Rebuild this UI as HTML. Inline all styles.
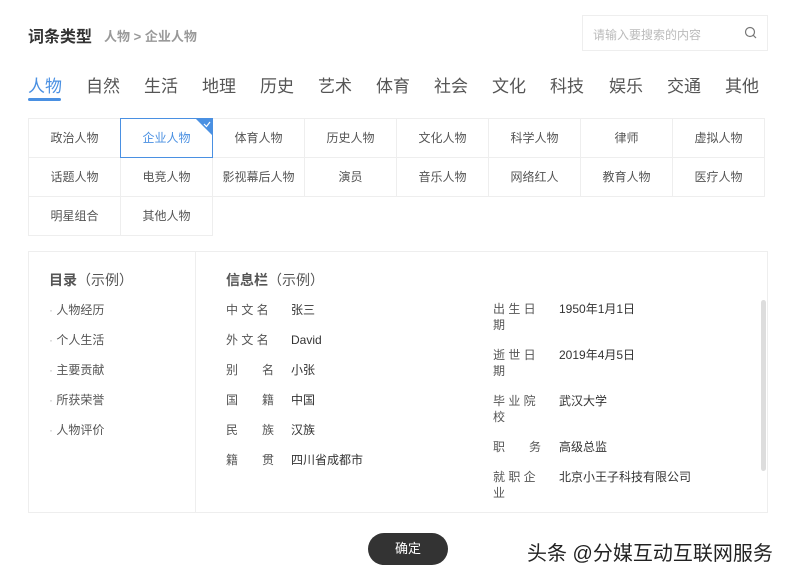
<!DOCTYPE html>
<html><head><meta charset="utf-8"><style>
*{margin:0;padding:0;box-sizing:border-box}
body{width:787px;height:577px;background:#fff;font-family:"Liberation Sans","Noto Sans CJK SC",sans-serif;color:#333;position:relative;overflow:hidden}
.a{position:absolute;white-space:nowrap}
.tab{position:absolute;top:72px;font-size:17px;color:#555}
.cell{position:absolute;width:93px;height:40px;border:1px solid #eee;font-size:12px;color:#555;text-align:center;line-height:38px}
.k{font-size:12px;color:#555}
.v{font-size:12px;color:#333}
.rk{position:absolute;left:493px;width:50px;font-size:12px;color:#555;line-height:16px;white-space:normal}
.rv{position:absolute;left:559px;font-size:12px;color:#333;line-height:16px;white-space:nowrap}
</style></head><body>
<div class="a" style="left:28px;top:23px;font-size:16px;font-weight:bold;color:#333">词条类型</div>
<div class="a" style="left:104px;top:26px;font-size:13px;color:#999;font-weight:bold">人物 &gt; 企业人物</div>
<div class="a" style="left:582px;top:15px;width:186px;height:36px;border:1px solid #eee"></div>
<div class="a" style="left:593px;top:26px;font-size:12px;color:#bbb">请输入要搜索的内容</div>
<svg class="a" style="left:744px;top:26px" width="14" height="14" viewBox="0 0 14 14"><circle cx="6" cy="6" r="4.5" fill="none" stroke="#777" stroke-width="1.2"/><path d="M9.3 9.3L12 12" stroke="#777" stroke-width="1.2"/></svg>
<div class="tab" style="left:28px;color:#4a90e2">人物</div>
<div class="a" style="left:28px;top:98px;width:33px;height:3px;background:#4a90e2;border-radius:2px"></div>
<div class="tab" style="left:86px">自然</div><div class="tab" style="left:144px">生活</div><div class="tab" style="left:202px">地理</div><div class="tab" style="left:260px">历史</div><div class="tab" style="left:318px">艺术</div><div class="tab" style="left:376px">体育</div><div class="tab" style="left:434px">社会</div><div class="tab" style="left:492px">文化</div><div class="tab" style="left:550px">科技</div><div class="tab" style="left:609px">娱乐</div><div class="tab" style="left:667px">交通</div><div class="tab" style="left:725px">其他</div>

<div class="cell" style="left:28px;top:118px">政治人物</div>
<div class="cell" style="left:212px;top:118px">体育人物</div>
<div class="cell" style="left:304px;top:118px">历史人物</div>
<div class="cell" style="left:396px;top:118px">文化人物</div>
<div class="cell" style="left:488px;top:118px">科学人物</div>
<div class="cell" style="left:580px;top:118px">律师</div>
<div class="cell" style="left:672px;top:118px">虚拟人物</div>
<div class="cell" style="left:28px;top:157px">话题人物</div>
<div class="cell" style="left:120px;top:157px">电竞人物</div>
<div class="cell" style="left:212px;top:157px">影视幕后人物</div>
<div class="cell" style="left:304px;top:157px">演员</div>
<div class="cell" style="left:396px;top:157px">音乐人物</div>
<div class="cell" style="left:488px;top:157px">网络红人</div>
<div class="cell" style="left:580px;top:157px">教育人物</div>
<div class="cell" style="left:672px;top:157px">医疗人物</div>
<div class="cell" style="left:28px;top:196px">明星组合</div>
<div class="cell" style="left:120px;top:196px">其他人物</div>
<div class="cell" style="left:120px;top:118px;border-color:#4a90e2;color:#4a90e2;overflow:hidden">企业人物
<svg style="position:absolute;right:0;top:0" width="16" height="16" viewBox="0 0 16 16"><path d="M0 0H16V16Z" fill="#4a90e2"/><path d="M8 5L10.5 7.5L14 3" stroke="#fff" stroke-width="1.2" fill="none"/></svg></div>

<div class="a" style="left:28px;top:251px;width:740px;height:262px;border:1px solid #eee"></div>
<div class="a" style="left:195px;top:252px;width:1px;height:260px;background:#eee"></div>
<div class="a" style="left:49px;top:270px;font-size:14px;color:#555"><b>目录</b>（示例）</div>
<div class="a" style="left:226px;top:270px;font-size:14px;color:#555"><b>信息栏</b>（示例）</div>
<div class="a k" style="left:49px;top:295px;line-height:30px;color:#555"><span style="color:#bbb">·</span> 人物经历<br><span style="color:#bbb">·</span> 个人生活<br><span style="color:#bbb">·</span> 主要贡献<br><span style="color:#bbb">·</span> 所获荣誉<br><span style="color:#bbb">·</span> 人物评价</div>
<div class="a k" style="left:226px;top:295px;line-height:30px">中 文 名<br>外 文 名<br>别　　名<br>国　　籍<br>民　　族<br>籍　　贯</div>
<div class="a v" style="left:291px;top:295px;line-height:30px">张三<br>David<br>小张<br>中国<br>汉族<br>四川省成都市</div>
<div class="rk" style="top:301px">出 生 日<br>期</div><div class="rv" style="top:301px">1950年1月1日</div>
<div class="rk" style="top:347px">逝 世 日<br>期</div><div class="rv" style="top:347px">2019年4月5日</div>
<div class="rk" style="top:393px">毕 业 院<br>校</div><div class="rv" style="top:393px">武汉大学</div>
<div class="rk" style="top:439px">职　　务</div><div class="rv" style="top:439px">高级总监</div>
<div class="rk" style="top:469px">就 职 企<br>业</div><div class="rv" style="top:469px">北京小王子科技有限公司</div>
<div class="a" style="left:761px;top:300px;width:5px;height:171px;background:#ddd;border-radius:3px"></div>

<div class="a" style="left:368px;top:533px;width:80px;height:32px;background:#333;border-radius:16px;color:#fff;font-size:13px;text-align:center;line-height:32px">确定</div>
<div class="a" style="left:527px;top:537px;font-size:20px;color:#222">头条 @分媒互动互联网服务</div>
</body></html>
